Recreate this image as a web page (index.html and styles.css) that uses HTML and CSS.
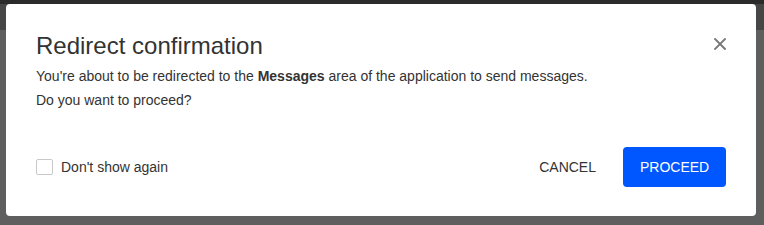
FILE: index.html
```html
<!DOCTYPE html>
<html lang="en">
<head>
<meta charset="utf-8">
<title>Redirect confirmation</title>
<link rel="stylesheet" href="styles.css">
</head>
<body>
<div class="dialog" role="dialog" aria-labelledby="dlg-title">
  <button class="close" aria-label="Close">
    <svg width="12" height="12" viewBox="0 0 12 12"><path d="M1 1 L11 11 M11 1 L1 11" stroke="#757575" stroke-width="1.8" stroke-linecap="square" fill="none"/></svg>
  </button>
  <h2 class="title" id="dlg-title">Redirect confirmation</h2>
  <div class="body">
    <p>You're about to be redirected to the <b>Messages</b> area of the application to send messages.</p>
    <p>Do you want to proceed?</p>
  </div>
  <div class="footer">
    <label class="check"><span class="box"></span><span>Don't show again</span></label>
    <div class="actions">
      <button class="btn-cancel">CANCEL</button>
      <button class="btn-primary">PROCEED</button>
    </div>
  </div>
</div>
</body>
</html>
```
FILE: styles.css
```css
html, body {
  margin: 0;
  padding: 0;
}
body {
  width: 764px;
  height: 225px;
  overflow: hidden;
  background: linear-gradient(#2b2b2b 0 4px, #464646 4px 30px, #5e5e5e 30px);
  font-family: "Liberation Sans", Arial, Helvetica, sans-serif;
  color: #333;
  padding: 4px 8px 0 6px;
  box-sizing: border-box;
}
.dialog {
  position: relative;
  width: 750px;
  height: 212px;
  background: #fff;
  border-radius: 4px;
  box-sizing: border-box;
  padding: 28px 30px 29px 30px;
  display: flex;
  flex-direction: column;
}
.close {
  position: absolute;
  top: 34px;
  right: 30px;
  width: 12px;
  height: 12px;
  padding: 0;
  border: 0;
  background: none;
  display: flex;
}
.title {
  margin: 0;
  font-size: 24px;
  font-weight: normal;
  line-height: 28px;
  color: #333;
}
.body {
  margin-top: 4px;
  font-size: 14px;
  line-height: 24px;
}
.body p {
  margin: 0;
}
.body b {
  font-weight: bold;
}
.footer {
  margin-top: auto;
  display: flex;
  align-items: center;
  justify-content: space-between;
}
.check {
  display: flex;
  align-items: center;
  gap: 8px;
  font-size: 14px;
}
.box {
  width: 17px;
  height: 16px;
  border: 1px solid #c9c9c9;
  border-radius: 2px;
  box-sizing: border-box;
  background: #fff;
}
.actions {
  display: flex;
  align-items: center;
  gap: 10px;
}
.actions button {
  font-family: inherit;
  font-size: 14px;
  height: 40px;
  border: 0;
  border-radius: 4px;
  cursor: pointer;
}
.btn-cancel {
  background: none;
  color: #333;
  padding: 0 17px;
}
.btn-primary {
  background: #0057ff;
  color: #fff;
  padding: 0 17px;
  width: 103px;
}
```
